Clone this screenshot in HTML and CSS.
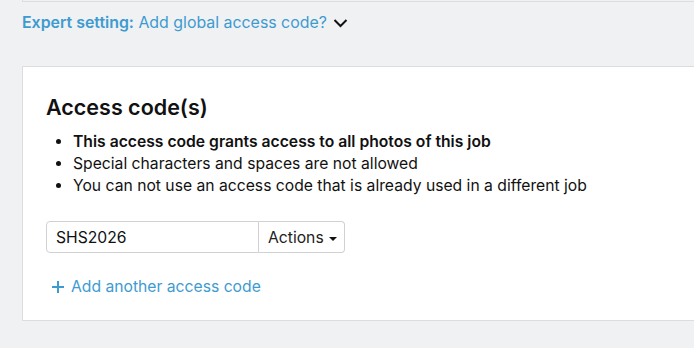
FILE: index.html
```html
<!DOCTYPE html>
<html lang="en">
<head>
    <meta charset="UTF-8">
    <meta name="viewport" content="width=device-width, initial-scale=1.0">
    <title>Access codes</title>
    <link rel="stylesheet" href="styles.css">
</head>
<body>
    <div class="page">
        <div class="prev-card"></div>
        <div class="expert">
            <a href="#" class="expert-link"><strong>Expert setting:</strong> Add global access code?</a>
            <svg class="chevron" width="15" height="10" viewBox="0 0 15 10"><path d="M1.5 2 L7.5 8 L13.5 2" fill="none" stroke="#111" stroke-width="2"/></svg>
        </div>
        <div class="card">
            <h2>Access code(s)</h2>
            <ul class="rules">
                <li><strong>This access code grants access to all photos of this job</strong></li>
                <li>Special characters and spaces are not allowed</li>
                <li>You can not use an access code that is already used in a different job</li>
            </ul>
            <div class="code-row">
                <input type="text" class="code-input" value="SHS2026">
                <button class="actions">Actions <span class="caret"></span></button>
            </div>
            <a href="#" class="add-code">
                <svg width="14" height="14" viewBox="0 0 14 14"><path d="M7 1 V13 M1 7 H13" stroke="#3d9bd0" stroke-width="2"/></svg>
                Add another access code
            </a>
        </div>
    </div>
</body>
</html>
```
FILE: styles.css
```css
body {
    margin: 0;
    background: #f0f1f3;
    font-family: Inter, "Noto Sans", sans-serif;
    color: #111;
}
.page {
    padding-left: 22px;
}
.prev-card {
    height: 1px;
    background: #f0f1f3;
    border-left: 1px solid #dcdde0;
    border-bottom: 1px solid #dcdde0;
}
.expert {
    display: flex;
    align-items: center;
    gap: 6px;
    margin-top: 10px;
    height: 20px;
}
.expert-link {
    color: #3d9bd0;
    text-decoration: none;
    font-size: 15.9px;
}
.expert-link strong {
    font-weight: 600;
}
.chevron {
    margin-top: 2px;
}
.card {
    margin-top: 34px;
    background: #fff;
    border: 1px solid #dcdde0;
    border-right: none;
    padding: 28px 24px 24px 23px;
}
h2 {
    margin: 0;
    font-size: 21.5px;
    font-weight: 600;
    line-height: 24px;
}
.rules {
    margin: 12px 0 0;
    padding-left: 27px;
    font-size: 15.7px;
    line-height: 22px;
}
.rules strong {
    font-weight: 600;
}
.code-row {
    display: flex;
    margin-top: 24px;
    width: 299px;
    height: 32px;
}
.code-input {
    box-sizing: border-box;
    width: 213px;
    height: 32px;
    border: 1px solid #cfd1d4;
    border-radius: 4px 0 0 4px;
    padding: 0 9px;
    font-family: inherit;
    font-size: 15.7px;
    color: #111;
    outline: none;
}
.actions {
    box-sizing: border-box;
    display: flex;
    align-items: center;
    gap: 5px;
    height: 32px;
    width: 86px;
    border: 1px solid #cfd1d4;
    border-left: none;
    border-radius: 0 4px 4px 0;
    background: #fff;
    font-family: inherit;
    font-size: 15.7px;
    color: #222;
    padding: 0 0 0 9px;
    white-space: nowrap;
}
.caret {
    width: 0;
    height: 0;
    margin-top: 3px;
    border-left: 4px solid transparent;
    border-right: 4px solid transparent;
    border-top: 4px solid #111;
}
.add-code {
    display: flex;
    align-items: center;
    gap: 6px;
    margin-top: 25px;
    margin-left: 5px;
    color: #3d9bd0;
    text-decoration: none;
    font-size: 15.7px;
    line-height: 18px;
}
```
